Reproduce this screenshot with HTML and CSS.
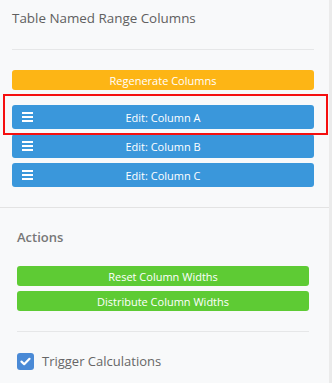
FILE: index.html
```html
<!DOCTYPE html>
<html>
<head>
<meta charset="utf-8">
<link rel="stylesheet" href="styles.css">
</head>
<body>
<div class="page">
  <div class="content">
    <section class="panel panel-top">
      <h2 class="title">Table Named Range Columns</h2>
      <hr class="sep sep-top">
      <button class="btn btn-orange">Regenerate Columns</button>
      <div class="edit-list">
        <button class="btn btn-blue"><span class="burger"><i></i><i></i><i></i></span>Edit: Column A</button>
        <button class="btn btn-blue"><span class="burger"><i></i><i></i><i></i></span>Edit: Column B</button>
        <button class="btn btn-blue"><span class="burger"><i></i><i></i><i></i></span>Edit: Column C</button>
      </div>
      <div class="highlight"></div>
    </section>
    <section class="panel panel-actions">
      <h3 class="subtitle">Actions</h3>
      <div class="action-list">
        <button class="btn btn-green">Reset Column Widths</button>
        <button class="btn btn-green">Distribute Column Widths</button>
      </div>
      <hr class="sep sep-actions">
      <label class="check-row">
        <span class="checkbox">
          <svg width="11" height="9" viewBox="0 0 11 9"><path d="M1.5 4.6 L4.2 7.2 L9.5 1.8" fill="none" stroke="#fff" stroke-width="2.2" stroke-linecap="round" stroke-linejoin="round"/></svg>
        </span>
        <span class="check-label">Trigger Calculations</span>
      </label>
    </section>
  </div>
  <div class="scrollbar"></div>
</div>
</body>
</html>
```
FILE: styles.css
```css
* { box-sizing: border-box; }
html, body {
  margin: 0;
  padding: 0;
  background: #f8f9fa;
  font-family: "Open Sans", "Noto Sans", sans-serif;
}
.page {
  display: flex;
  height: 383px;
  overflow: hidden;
}
.content {
  flex: 1;
  position: relative;
}
.scrollbar {
  width: 3px;
  background: #ebebeb;
}
.panel-top {
  padding: 9px 15px 20px 12px;
  border-bottom: 1px solid #e3e3e3;
}
.title {
  margin: 0;
  font-size: 13.4px;
  line-height: 18px;
  font-weight: 400;
  color: #606060;
}
.sep {
  border: 0;
  height: 1px;
  background: #e6e7e8;
  margin: 0;
}
.sep-top { margin-top: 22px; margin-bottom: 20px; }
.btn {
  display: flex;
  align-items: center;
  justify-content: center;
  width: 100%;
  border: 0;
  border-radius: 3px;
  color: #fff;
  font-family: "Open Sans", "Noto Sans", sans-serif;
  font-size: 11px;
  padding: 0;
  position: relative;
}
.btn-orange {
  height: 20px;
  background: #fdb515;
}
.edit-list {
  display: flex;
  flex-direction: column;
  gap: 5px;
  margin-top: 15px;
}
.btn-blue {
  height: 24px;
  background: #3a97db;
  font-size: 11px;
}
.burger {
  position: absolute;
  left: 10px;
  top: 7px;
  width: 11px;
  height: 10px;
  display: flex;
  flex-direction: column;
  justify-content: space-between;
}
.burger i {
  display: block;
  height: 2px;
  background: #fff;
}
.highlight {
  position: absolute;
  left: 3px;
  top: 94px;
  width: 325px;
  height: 41px;
  border: 2px solid #f50f0f;
  pointer-events: none;
}
.panel-actions {
  padding: 20px 20px 0 17px;
}
.subtitle {
  margin: 0;
  font-size: 13px;
  line-height: 18px;
  font-weight: 600;
  color: #777;
}
.action-list {
  display: flex;
  flex-direction: column;
  gap: 5px;
  margin-top: 20px;
}
.btn-green {
  height: 20px;
  background: #5ecb34;
}
.sep-actions { margin-top: 20px; }
.check-row {
  display: flex;
  align-items: center;
  gap: 8px;
  margin-top: 20px;
}
.checkbox {
  width: 17px;
  height: 17px;
  border-radius: 3px;
  background: #4a8ad6;
  display: flex;
  align-items: center;
  justify-content: center;
}
.check-label {
  font-size: 13px;
  color: #666;
  line-height: 18px;
}
```
